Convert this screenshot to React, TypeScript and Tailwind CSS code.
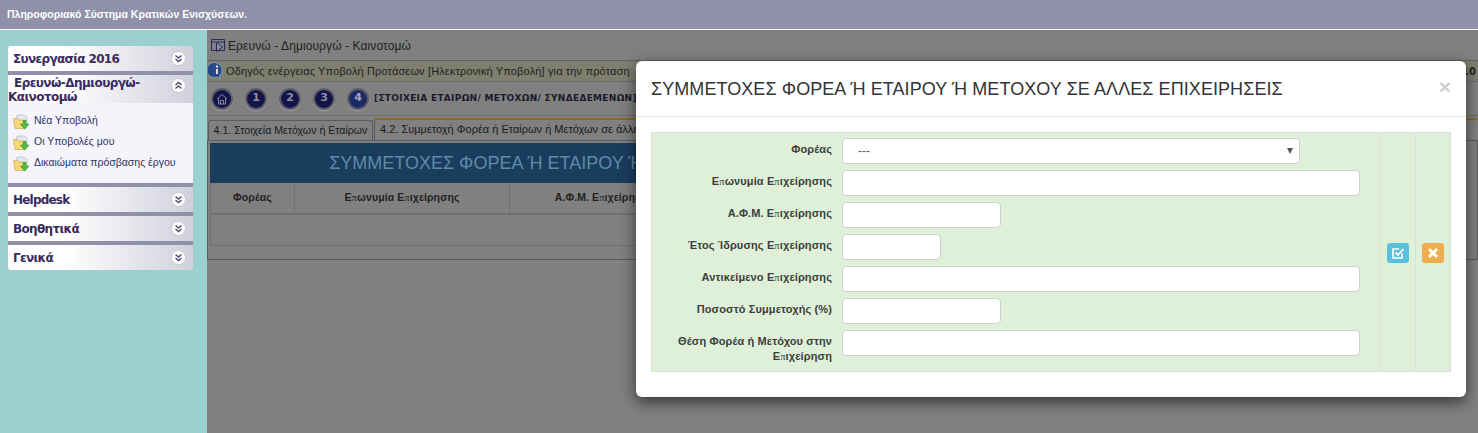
import React from "react";

const sans = "font-['Liberation_Sans',Arial,sans-serif]";
const tah = "font-['DejaVu_Sans',Verdana,sans-serif]";

function Pi() {
  return <span className="font-['Liberation_Serif',serif] text-[10.5px] font-normal">π</span>;
}

function Chevron({ up }: { up?: boolean }) {
  return (
    <svg width="15" height="15" viewBox="0 0 15 15" className="shrink-0">
      <circle cx="7.5" cy="7.5" r="7" fill="#fff" stroke="#c8c8d4" />
      <path
        d={up ? "M4.5 7 7.5 4.5 10.5 7M4.5 10.5 7.5 8 10.5 10.5" : "M4.5 4.5 7.5 7 10.5 4.5M4.5 8 7.5 10.5 10.5 8"}
        fill="none"
        stroke="#4a4a6a"
        strokeWidth="1.4"
      />
    </svg>
  );
}

function Folder() {
  return (
    <svg width="17" height="16" viewBox="0 0 17 16" className="shrink-0">
      <path d="M3 5 4 1h7l3 2v7H4z" fill="#dfe8f4" stroke="#a9b8cc" strokeWidth=".6" />
      <path d="M0.5 4.5h4l1 1.5h7l-1 8.5H2z" fill="#f6d976" stroke="#c8a23c" strokeWidth=".6" />
      <path d="M10.2 6.5h3v3.5H16l-4.3 5.2L7.4 10h2.8z" fill="#52b83f" stroke="#2f8a28" strokeWidth=".5" />
    </svg>
  );
}

function Header({ title, tight }: { title: string; tight?: boolean }) {
  return (
    <div className="flex h-[25px] items-center justify-between bg-gradient-to-r from-white from-30% to-[#d0d0dc] pl-[5px] pr-[7px]">
      <span
        className={`${tah} text-[12px] font-bold leading-none text-[#3a2a5e] ${
          tight ? "tracking-[-0.8px]" : "tracking-[-0.65px]"
        }`}
      >
        {title}
      </span>
      <Chevron />
    </div>
  );
}

function Band() {
  return <div className="h-1 bg-[#9090a8]" />;
}

function Step({ label, active, home }: { label?: string; active?: boolean; home?: boolean }) {
  return (
    <div
      className={`flex size-[22px] shrink-0 items-center justify-center rounded-full border-2 border-[#5e5e6a] text-[11px] font-bold text-[#8f8fa0] shadow-[0_1px_1px_#a0a0a0] ${tah} ${
        active ? "bg-[#1c2a66] text-[#a4a4b8]" : "bg-[#14144a]"
      }`}
    >
      {home ? (
        <svg width="12" height="12" viewBox="0 0 12 12" fill="none" stroke="#8a8a98" strokeWidth="1">
          <path d="M1 6 6 1.5 11 6M2.5 5.5V11h7V5.5M4.5 11V7.5h3V11" />
        </svg>
      ) : (
        label
      )}
    </div>
  );
}

function Field({ label, width, select, twoLine }: { label: React.ReactNode; width: string; select?: boolean; twoLine?: boolean }) {
  return (
    <div className={`flex items-start ${twoLine ? "h-[37px]" : "h-[32px]"}`}>
      <label
        className={`${sans} w-[180px] pt-[4px] text-right text-[11px] font-bold leading-[15px] tracking-[0.12px] text-[#3d3d3d]`}
      >
        {label}
      </label>
      <div
        className={`${width} ml-[10px] flex h-[26px] items-center justify-between rounded-[4px] border border-[#cfcfcf] bg-white ${sans} text-[12px] text-[#555]`}
      >
        {select && (
          <>
            <span className="pl-[15px]">---</span>
            <span className="mr-[6px] h-0 w-0 border-x-[3.5px] border-t-[6px] border-x-transparent border-t-[#555]" />
          </>
        )}
      </div>
    </div>
  );
}

export default function App() {
  return (
    <div className="relative h-[433px] w-[1478px] overflow-hidden bg-[#9ccfcf]">
      <div className="flex h-[29px] items-center bg-[#9090a8] pl-[7px] font-bold text-white">
        <span className={`${sans} text-[10.5px]`}>Πληροφοριακό Σύστημα Κρατικών Ενισχύσεων.</span>
      </div>
      <div className="h-px bg-white" />
      <div className="flex h-[403px]">
        <aside className="w-[207px] shrink-0 px-2 pt-4">
          <div className="w-[185px] overflow-hidden rounded-[3px]">
            <Header title="Συνεργασία 2016" />
            <Band />
            <div className="flex h-[28px] justify-between bg-gradient-to-r from-white from-30% to-[#d0d0dc] pr-[7px] pt-px">
              <span className={`${tah} text-[12px] font-bold leading-[14px] tracking-[-0.55px] text-[#3a2a5e]`}>
                <span className="pl-[6px]">Ερευνώ-Δημιουργώ-</span>
                <br />
                Καινοτομώ
              </span>
              <span className="pt-[2px]">
                <Chevron up />
              </span>
            </div>
            <div className="h-[80px] bg-[#f4f4fa] pl-[5px] pt-[8px]">
              {["Νέα Υποβολή", "Οι Υποβολές μου", "Δικαιώματα πρόσβασης έργου"].map((t) => (
                <div key={t} className="flex h-[21px] items-center gap-1">
                  <Folder />
                  <span className={`${sans} -mt-[2px] text-[10.5px] text-[#333366]`}>{t}</span>
                </div>
              ))}
            </div>
            <Band />
            <Header title="Helpdesk" tight />
            <Band />
            <Header title="Βοηθητικά" />
            <Band />
            <Header title="Γενικά" />
          </div>
        </aside>

        <main className="min-w-0 flex-1 overflow-hidden bg-[#808080]">
          <div className={`${sans} flex h-[31px] items-center gap-px border-b border-[#5f5f5f] pl-[4px] text-[12px] tracking-[0.1px] text-[#222]`}>
            <svg width="16" height="16" viewBox="0 0 16 16" fill="none" stroke="#2a2a5a" strokeWidth="1">
              <path d="M.5 2.5h13v11h-13zM.5 5h13" />
              <path d="M5.5 5.5v9l6-4.5z" fill="#8a8aa0" />
            </svg>
            <span className="pt-px">Ερευνώ - Δημιουργώ - Καινοτομώ</span>
          </div>
          <div className={`${sans} flex h-[21px] items-center justify-between border-b border-[#6e6e6e] bg-[#7f7f70] pl-px text-[11px] tracking-[0.14px] text-[#222] whitespace-nowrap`}>
            <span className="flex items-center">
              <svg width="18" height="18" viewBox="0 0 18 18" className="shrink-0">
                <path d="M9 1a7.5 7.5 0 1 0 0 14l3 2-.5-3A7.5 7.5 0 0 0 9 1z" fill="#264a88" stroke="#8fa0bc" />
                <circle cx="9" cy="4.5" r="1.2" fill="#ddd" />
                <path d="M9 7v5" stroke="#ddd" strokeWidth="2" />
              </svg>
              <span className="pt-px">Οδηγός ενέργειας Υποβολή Προτάσεων [Ηλεκτρονική Υποβολή] για την πρόταση</span>
            </span>
            <span className={`${tah} pr-[2px] text-[10px] font-bold`}>:10</span>
          </div>
          <div className="flex h-[34px] items-center gap-[12px] border-b border-[#6e6e6e] pl-[4px]">
            <Step home />
            <Step label="1" />
            <Step label="2" />
            <Step label="3" />
            <Step label="4" active />
            <span className={`${tah} -ml-[7px] text-[9px] font-bold tracking-[0.3px] text-[#1a1a2a] whitespace-nowrap`}>
              [ΣΤΟΙΧΕΙΑ ΕΤΑΙΡΩΝ/ ΜΕΤΟΧΩΝ/ ΣΥΝΔΕΔΕΜΕΝΩΝ]
            </span>
          </div>
          <div className={`${sans} flex h-[24px] items-end pl-px text-[10.6px] text-[#1a1a1a] whitespace-nowrap`}>
            <div className="flex h-[20px] w-[165px] items-center justify-center rounded-t-[3px] border border-b-0 border-[#5c5c5c]">
              4.1. Στοιχεία Μετόχων ή Εταίρων
            </div>
            <div className="ml-px flex h-[22px] flex-1 items-center rounded-t-[3px] border-l border-t-2 border-[#5c5c5c] border-t-[#8a6c1c] bg-[#808080] pb-[2px] pl-[5px] text-[11px]">
              4.2. Συμμετοχή Φορέα ή Εταίρων ή Μετόχων σε άλλες επιχειρήσεις
            </div>
          </div>
          <div className="h-[120px] border border-[#5c5c5c] px-[2px] pt-[2px]">
            <div className="w-[866px]">
              <div className={`${sans} flex h-[40px] items-center justify-center bg-[#1a3d5e] text-[18px] text-[#5f8aa8] whitespace-nowrap`}>
                ΣΥΜΜΕΤΟΧΕΣ ΦΟΡΕΑ Ή ΕΤΑΙΡΟΥ Ή ΜΕΤΟΧΟΥ ΣΕ ΑΛΛΕΣ ΕΠΙΧΕΙΡΗΣΕΙΣ
              </div>
              <div className={`${sans} flex h-[32px] border-x border-b-2 border-[#707070] text-[10.5px] font-bold tracking-[0.1px] text-[#222]`}>
                <div className="flex w-[84px] items-center justify-center border-r border-[#707070]">Φορέας</div>
                <div className="flex w-[215px] items-center justify-center border-r border-[#707070]">
                  <span>
                    Ε<Pi />ωνυμία Ε<Pi />ιχείρησης
                  </span>
                </div>
                <div className="flex w-[190px] items-center justify-center border-r border-[#707070]">
                  <span>
                    Α.Φ.Μ. Ε<Pi />ιχείρησης
                  </span>
                </div>
                <div className="flex-1" />
              </div>
              <div className="h-[31px] border-x border-b border-[#707070]" />
            </div>
          </div>
        </main>
      </div>

      <div className="absolute left-[636px] top-[61px] h-[336px] w-[830px] rounded-[6px] bg-white shadow-[0_5px_15px_rgba(0,0,0,0.6)]">
        <div className="relative flex h-[56px] items-center border-b border-[#e5e5e5] pl-[15px]">
          <h4 className={`${sans} text-[18px] leading-none tracking-[0.07px] text-[#333] whitespace-nowrap`}>
            ΣΥΜΜΕΤΟΧΕΣ ΦΟΡΕΑ Ή ΕΤΑΙΡΟΥ Ή ΜΕΤΟΧΟΥ ΣΕ ΑΛΛΕΣ ΕΠΙΧΕΙΡΗΣΕΙΣ
          </h4>
          <span className={`${sans} absolute right-[15px] top-[15px] text-[21px] font-bold leading-none text-[#cfcfcf]`}>×</span>
        </div>
        <div className="p-[15px]">
          <div className="flex h-[240px] border border-[#dddddd] bg-[#dff0d8]">
            <div className="w-[728px] pt-[5px]">
              <Field label="Φορέας" width="w-[458px]" select />
              <Field label={<>Ε<Pi />ωνυμία Ε<Pi />ιχείρησης</>} width="w-[518px]" />
              <Field label={<>Α.Φ.Μ. Ε<Pi />ιχείρησης</>} width="w-[159px]" />
              <Field label={<>Έτος Ίδρυσης Ε<Pi />ιχείρησης</>} width="w-[99px]" />
              <Field label={<>Αντικείμενο Ε<Pi />ιχείρησης</>} width="w-[518px]" />
              <Field label="Ποσοστό Συμμετοχής (%)" width="w-[159px]" />
              <Field label={<>Θέση Φορέα ή Μετόχου στην<br />Ε<Pi />ιχείρηση</>} width="w-[518px]" twoLine />
            </div>
            <div className="flex w-[35px] items-center justify-center border-l border-[#dddddd]">
              <div className="mt-[1px] flex h-5 w-[22px] items-center justify-center rounded-[3px] bg-[#5bc0de]">
                <svg width="14" height="14" viewBox="0 0 14 14" fill="none" stroke="#fff">
                  <path d="M11 7.5V12H2V3h6" strokeWidth="1.6" />
                  <path d="M4.5 6.5 7 9l5.5-6" strokeWidth="1.8" stroke="#fff" />
                </svg>
              </div>
            </div>
            <div className="flex flex-1 items-center justify-center border-l border-[#dddddd]">
              <div className="mt-[1px] flex h-5 w-[22px] items-center justify-center rounded-[3px] bg-[#f0ad4e]">
                <svg width="12" height="12" viewBox="0 0 12 12" stroke="#fff" strokeWidth="3">
                  <path d="M2 2l8 8M10 2l-8 8" />
                </svg>
              </div>
            </div>
          </div>
        </div>
      </div>
    </div>
  );
}
